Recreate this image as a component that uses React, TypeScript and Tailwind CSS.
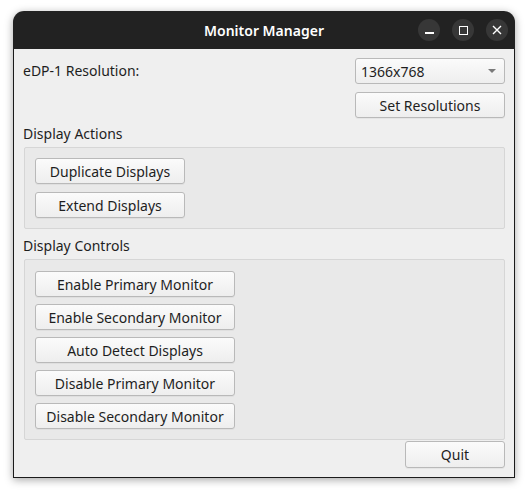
import React from "react";

const font = { fontFamily: '"Noto Sans", "Open Sans", sans-serif' };

function Btn({ children, w, h = "h-[26px]" }: { children: React.ReactNode; w: string; h?: string }) {
  return (
    <div
      className={`${w} ${h} flex items-center justify-center rounded-[3px] border border-[#b9b9b9] bg-gradient-to-b from-[#fbfbfb] to-[#eeeeee] text-[14px] text-[#1e1e1e] shadow-[0_1px_0_rgba(0,0,0,0.04)]`}
    >
      {children}
    </div>
  );
}

export default function App() {
  return (
    <div className="w-[528px] h-[494px] bg-white pl-[13px] pt-[11px]" style={font}>
      <div className="w-[502px] h-[467px] flex flex-col rounded-t-[11px] shadow-[0_2px_8px_rgba(0,0,0,0.35)]">
        {/* title bar */}
        <div className="h-[38px] shrink-0 rounded-t-[11px] bg-[#222222] relative flex items-center justify-center">
          <span className="text-white text-[14px] font-semibold">Monitor Manager</span>
          <div className="absolute right-[7px] top-[8px] flex gap-[12px]">
            <div className="w-[22px] h-[22px] rounded-full bg-[#373737] flex items-center justify-center">
              <div className="w-[9px] h-[1.5px] bg-white mt-[6px]" />
            </div>
            <div className="w-[22px] h-[22px] rounded-full bg-[#373737] flex items-center justify-center">
              <div className="w-[9px] h-[9px] border-[1.5px] border-white" />
            </div>
            <div className="w-[22px] h-[22px] rounded-full bg-[#373737] flex items-center justify-center">
              <svg width="10" height="10" viewBox="0 0 10 10">
                <path d="M1 1L9 9M9 1L1 9" stroke="white" strokeWidth="1.4" />
              </svg>
            </div>
          </div>
        </div>
        {/* body */}
        <div className="flex-1 bg-[#efefef] border-x border-b border-[#1b1b1b] px-[9px] pt-[9px] flex flex-col text-[#1e1e1e] text-[14px]">
          <div className="flex items-center justify-between">
            <span className="leading-[20px]">eDP-1 Resolution:</span>
            <div className="w-[150px] h-[26px] rounded-[3px] border border-[#b9b9b9] bg-gradient-to-b from-[#fbfbfb] to-[#eeeeee] flex items-center justify-between pl-[5px] pr-[8px]">
              <span>1366x768</span>
              <svg width="8" height="4" viewBox="0 0 8 4">
                <path d="M0 0H8L4 4Z" fill="#7a7a7a" />
              </svg>
            </div>
          </div>
          <div className="flex justify-end mt-[8px]">
            <Btn w="w-[150px]">Set Resolutions</Btn>
          </div>
          <div className="mt-[6px] leading-[20px]">Display Actions</div>
          <div className="mt-[3px] ml-[1px] rounded-[2px] border border-[#d6d6d6] bg-[#e9e9e9] pl-[10px] pt-[10px] pb-[10px] flex flex-col gap-[8px]">
            <Btn w="w-[150px]">Duplicate Displays</Btn>
            <Btn w="w-[150px]">Extend Displays</Btn>
          </div>
          <div className="mt-[7px] leading-[20px]">Display Controls</div>
          <div className="mt-[3px] ml-[1px] rounded-[2px] border border-[#d6d6d6] bg-[#e9e9e9] pl-[10px] pt-[11px] pb-[10px] flex flex-col gap-[7px]">
            <Btn w="w-[200px]">Enable Primary Monitor</Btn>
            <Btn w="w-[200px]">Enable Secondary Monitor</Btn>
            <Btn w="w-[200px]">Auto Detect Displays</Btn>
            <Btn w="w-[200px]">Disable Primary Monitor</Btn>
            <Btn w="w-[200px]">Disable Secondary Monitor</Btn>
          </div>
          <div className="flex justify-end mt-[1px]">
            <Btn w="w-[100px]" h="h-[27px]">Quit</Btn>
          </div>
        </div>
      </div>
    </div>
  );
}
